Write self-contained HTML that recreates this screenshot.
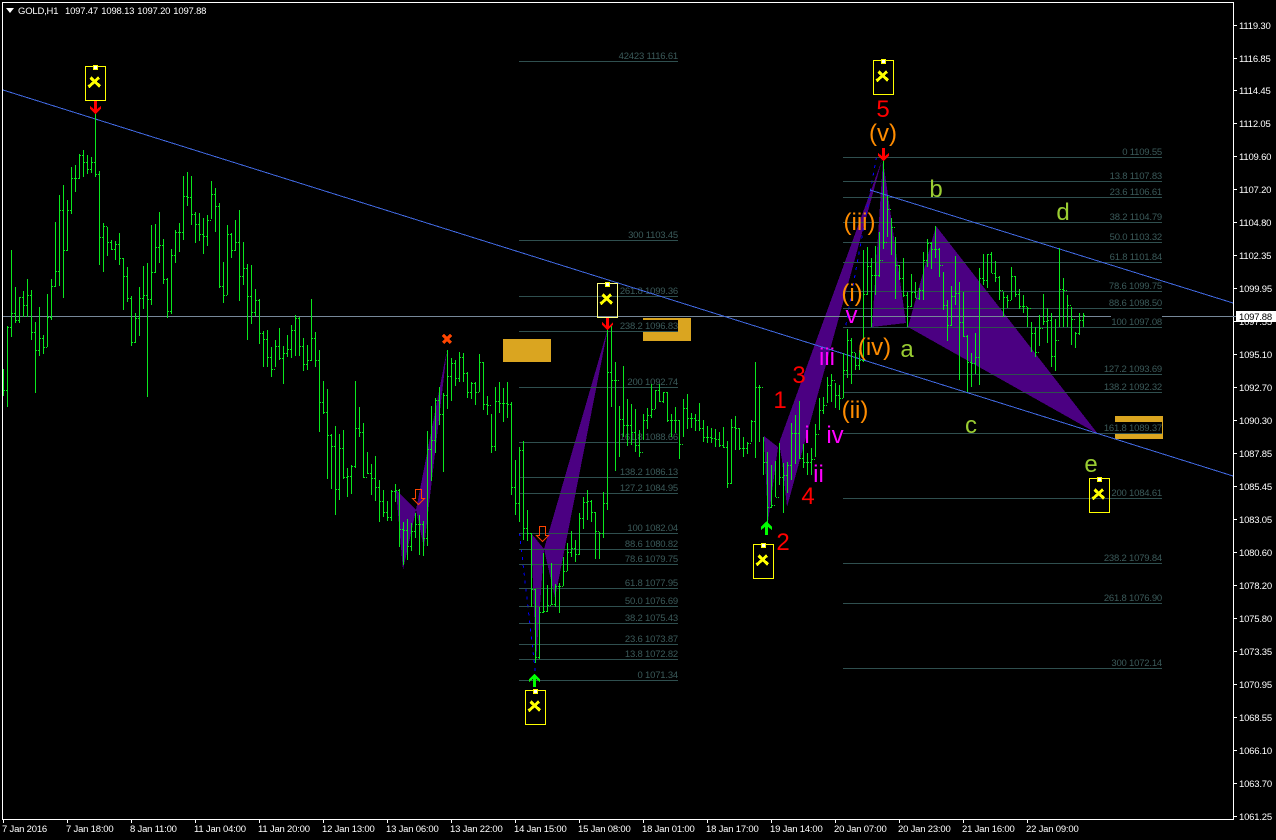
<!DOCTYPE html>
<html><head><meta charset="utf-8"><title>GOLD,H1</title>
<style>
html,body{margin:0;padding:0;background:#000;width:1276px;height:840px;overflow:hidden}
svg{display:block;position:absolute;left:0;top:0}
text{font-family:"Liberation Sans",sans-serif}
.ax text{font-size:9.5px;letter-spacing:-.2px;fill:#fff}
.fl text{font-size:9.5px;letter-spacing:-.2px;fill:#3b5a5a;text-anchor:end}
.w text{font-size:24px;text-anchor:middle}
</style></head><body>
<svg width="1276" height="840" viewBox="0 0 1276 840" xmlns="http://www.w3.org/2000/svg">
<rect width="1276" height="840" fill="#000"/>
<!-- harmonic patterns -->
<g fill="#4b0082" shape-rendering="crispEdges">
<polygon points="396,490 416,510 403,570"/>
<polygon points="416,510 447,350 424,548"/>
<polygon points="531,533 544,549 536,662"/>
<polygon points="544,549 608,328 555,598"/>
<polygon points="764,436 778,447 768,522"/>
<polygon points="779,443 882,160 787,507 782,460"/>
<polygon points="883,160 906,323 872,327"/>
<polygon points="908,327 936,226 1098,434"/>
</g>
<!-- zones -->
<g fill="#daa520">
<rect x="503" y="339" width="48" height="23"/>
<rect x="643" y="318" width="48" height="23"/>
<rect x="1115" y="416" width="48" height="23"/>
</g>
<!-- current price line -->
<path d="M3 316.5H1233" stroke="#778899" stroke-width="1" shape-rendering="crispEdges"/>
<!-- blue dotted -->
<g stroke="#0000ff" stroke-width="1" stroke-dasharray="3 5" fill="none" shape-rendering="crispEdges">
<path d="M519.5 533L535.5 673"/>
<path d="M876.5 157L845.5 327"/>
</g>
<!-- fib lines -->
<g fill="#2f4f4f" shape-rendering="crispEdges">
<rect x="519" y="61" width="159" height="1"/><rect x="519" y="240" width="159" height="1"/><rect x="519" y="296" width="159" height="1"/><rect x="519" y="331" width="159" height="1"/><rect x="519" y="387" width="159" height="1"/><rect x="519" y="442" width="159" height="1"/><rect x="519" y="477" width="159" height="1"/><rect x="519" y="493" width="159" height="1"/><rect x="519" y="533" width="159" height="1"/><rect x="519" y="549" width="159" height="1"/><rect x="519" y="564" width="159" height="1"/><rect x="519" y="588" width="159" height="1"/><rect x="519" y="606" width="159" height="1"/><rect x="519" y="623" width="159" height="1"/><rect x="519" y="644" width="159" height="1"/><rect x="519" y="659" width="159" height="1"/><rect x="519" y="680" width="159" height="1"/>
<rect x="843" y="157" width="319" height="1"/><rect x="843" y="181" width="319" height="1"/><rect x="843" y="197" width="319" height="1"/><rect x="843" y="222" width="319" height="1"/><rect x="843" y="242" width="319" height="1"/><rect x="843" y="262" width="319" height="1"/><rect x="843" y="291" width="319" height="1"/><rect x="843" y="308" width="319" height="1"/><rect x="843" y="327" width="319" height="1"/><rect x="843" y="374" width="319" height="1"/><rect x="843" y="392" width="319" height="1"/><rect x="843" y="433" width="319" height="1"/><rect x="843" y="498" width="319" height="1"/><rect x="843" y="563" width="319" height="1"/><rect x="843" y="603" width="319" height="1"/><rect x="843" y="668" width="319" height="1"/>
</g>
<!-- fib label backgrounds -->
<g fill="#000" shape-rendering="crispEdges">
<rect x="618" y="50" width="60" height="11"/><rect x="628" y="229" width="50" height="11"/><rect x="620" y="285" width="58" height="11"/><rect x="620" y="320" width="58" height="11"/><rect x="628" y="376" width="50" height="11"/><rect x="620" y="431" width="58" height="11"/><rect x="620" y="466" width="58" height="11"/><rect x="620" y="482" width="58" height="11"/><rect x="628" y="522" width="50" height="11"/><rect x="625" y="538" width="53" height="11"/><rect x="625" y="553" width="53" height="11"/><rect x="625" y="577" width="53" height="11"/><rect x="625" y="595" width="53" height="11"/><rect x="625" y="612" width="53" height="11"/><rect x="625" y="633" width="53" height="11"/><rect x="625" y="648" width="53" height="11"/><rect x="638" y="669" width="40" height="11"/>
<rect x="1122" y="146" width="40" height="11"/><rect x="1109" y="170" width="53" height="11"/><rect x="1109" y="186" width="53" height="11"/><rect x="1109" y="211" width="53" height="11"/><rect x="1109" y="231" width="53" height="11"/><rect x="1109" y="251" width="53" height="11"/><rect x="1109" y="280" width="53" height="11"/><rect x="1109" y="297" width="53" height="11"/><rect x="1111" y="316" width="51" height="11"/><rect x="1104" y="363" width="58" height="11"/><rect x="1104" y="381" width="58" height="11"/><rect x="1104" y="422" width="58" height="11"/><rect x="1111" y="487" width="51" height="11"/><rect x="1104" y="552" width="58" height="11"/><rect x="1104" y="592" width="58" height="11"/><rect x="1111" y="657" width="51" height="11"/>
</g>
<g class="fl">
<text x="678" y="59">42423 1116.61</text><text x="678" y="238">300 1103.45</text><text x="678" y="294">261.8 1099.36</text><text x="678" y="329">238.2 1096.83</text><text x="678" y="385">200 1092.74</text><text x="678" y="440">161.8 1088.66</text><text x="678" y="475">138.2 1086.13</text><text x="678" y="491">127.2 1084.95</text><text x="678" y="531">100 1082.04</text><text x="678" y="547">88.6 1080.82</text><text x="678" y="562">78.6 1079.75</text><text x="678" y="586">61.8 1077.95</text><text x="678" y="604">50.0 1076.69</text><text x="678" y="621">38.2 1075.43</text><text x="678" y="642">23.6 1073.87</text><text x="678" y="657">13.8 1072.82</text><text x="678" y="678">0 1071.34</text>
<text x="1162" y="155">0 1109.55</text><text x="1162" y="179">13.8 1107.83</text><text x="1162" y="195">23.6 1106.61</text><text x="1162" y="220">38.2 1104.79</text><text x="1162" y="240">50.0 1103.32</text><text x="1162" y="260">61.8 1101.84</text><text x="1162" y="289">78.6 1099.75</text><text x="1162" y="306">88.6 1098.50</text><text x="1162" y="325">100 1097.08</text><text x="1162" y="372">127.2 1093.69</text><text x="1162" y="390">138.2 1092.32</text><text x="1162" y="431">161.8 1089.37</text><text x="1162" y="496">200 1084.61</text><text x="1162" y="561">238.2 1079.84</text><text x="1162" y="601">261.8 1076.90</text><text x="1162" y="666">300 1072.14</text>
</g>
<!-- trend lines -->
<g stroke="#4169e1" stroke-width="1" fill="none" shape-rendering="crispEdges">
<path d="M3 90L1233 476"/>
<path d="M870 190L1233 303"/>
</g>
<!-- bars -->
<path transform="translate(.5 0)" shape-rendering="crispEdges" stroke="#0ae81e" stroke-width="1" fill="none" d="M3 369V396M7 326V407M11 250V337M15 287V323M19 297V323M23 291V317M27 279V317M31 290V340M35 322V393M39 307V356M43 335V354M47 294V347M51 279V320M55 222V287M59 195V286M63 185V298M67 200V251M71 167V214M75 165V192M79 154V179M83 150V177M87 155V174M91 157V173M95 109V177M99 171V265M103 223V272M107 227V256M111 240V250M115 241V260M119 233V265M123 258V310M127 267V302M131 296V346M135 313V343M139 287V336M143 266V309M147 263V397M151 225V305M155 224V273M159 212V263M163 239V284M167 278V318M171 249V314M175 230V263M179 223V252M183 176V240M187 172V206M191 176V225M195 212V243M199 213V241M203 218V254M207 215V246M211 181V219M215 188V232M219 203V288M223 262V303M227 225V295M231 233V258M235 220V251M239 210V301M243 242V285M247 264V340M251 265V324M255 289V316M259 299V344M263 331V367M267 330V367M271 347V377M275 340V367M279 328V360M283 346V384M287 335V357M291 325V358M295 315V356M299 317V356M303 338V371M307 345V370M311 299V361M315 332V367M319 350V432M323 381V414M327 389V479M331 434V489M335 426V515M339 434V500M343 430V479M347 468V497M351 465V494M355 381V468M359 407V437M363 423V478M367 452V474M371 464V495M375 456V501M379 480V522M383 490V517M387 501V521M391 490V521M395 484V502M399 489V547M403 522V565M407 519V560M411 523V551M415 513V538M419 515V555M423 521V556M427 431V546M431 406V481M435 398V453M439 387V425M443 393V472M447 350V409M451 358V401M455 360V386M459 352V382M463 353V382M467 372V398M471 382V399M475 382V405M479 354V392M483 362V410M487 396V415M491 414V453M495 387V451M499 382V413M503 388V422M507 382V418M511 402V495M515 460V515M519 447V522M523 441V540M527 510V541M531 533V607M535 589V663M539 607V659M543 553V613M547 585V612M551 563V605M555 584V607M559 583V613M563 557V586M567 543V571M571 531V557M575 540V562M579 513V555M583 497V529M587 490V520M591 500V522M595 512V559M599 532V559M603 492V538M607 325V510M611 325V407M615 362V471M619 406V457M623 366V437M627 399V446M631 404V445M635 409V452M639 430V457M643 414V440M647 408V429M651 384V418M655 390V409M659 384V402M663 392V403M667 392V422M671 414V437M675 407V433M679 420V459M683 399V437M687 394V429M691 413V428M695 414V431M699 403V431M703 420V442M707 426V443M711 428V443M715 429V447M719 432V447M723 427V448M727 441V488M731 419V484M735 416V450M739 428V450M743 437V457M747 442V454M751 420V442M755 362V458M759 385V442M763 437V475M767 452V523M771 465V508M775 461V497M779 443V485M783 463V513M787 462V493M791 423V480M795 415V464M799 401V459M803 444V468M807 453V475M811 448V475M815 424V457M819 398V430M823 397V414M827 377V403M831 374V402M835 383V408M839 385V410M843 353V398M847 329V378M851 338V384M855 353V370M859 350V370M863 250V362M867 247V295M871 258V327M875 246V295M879 232V277M883 156V249M887 196V237M891 218V255M895 237V299M899 265V280M903 258V297M907 292V327M911 274V307M915 282V298M919 288V300M923 252V300M927 239V267M931 242V269M935 226V258M939 248V277M943 272V310M947 300V341M951 286V326M955 256V305M959 282V380M963 292V337M967 335V392M971 353V387M975 333V374M979 268V385M983 254V285M987 254V288M991 252V273M995 261V282M999 276V300M1003 292V317M1007 295V308M1011 267V300M1015 276V297M1019 289V309M1023 295V313M1027 307V327M1031 322V352M1035 327V357M1039 315V346M1043 294V325M1047 308V343M1051 313V367M1055 319V371M1059 248V327M1063 278V327M1067 295V327M1071 307V345M1075 332V348M1079 313V335M1083 313V327"/>
<path transform="translate(0 .5)" shape-rendering="crispEdges" stroke="#0ae81e" stroke-width="1" fill="none" d="M4 390h1m1 0h1M8 327h1m1 0h1M12 313h1m1 0h1M16 320h1m1 0h1M20 297h1m1 0h1M24 305h1m1 0h1M28 295h1m1 0h1M32 332h1m1 0h1M36 350h1m1 0h1M40 338h1m1 0h1M44 347h1m1 0h1M48 317h1m1 0h1M52 286h1m1 0h1M56 271h1m1 0h1M60 210h1m1 0h1M64 250h1m1 0h1M68 210h1m1 0h1M72 178h1m1 0h1M76 178h1m1 0h1M80 155h1m1 0h1M84 162h1m1 0h1M88 169h1m1 0h1M92 162h1m1 0h1M96 174h1m1 0h1M100 237h1m1 0h1M104 226h1m1 0h1M108 242h1m1 0h1M112 249h1m1 0h1M116 244h1m1 0h1M120 258h1m1 0h1M124 276h1m1 0h1M128 298h1m1 0h1M132 342h1m1 0h1M136 318h1m1 0h1M140 298h1m1 0h1M144 295h1m1 0h1M148 299h1m1 0h1M152 272h1m1 0h1M156 247h1m1 0h1M160 245h1m1 0h1M164 279h1m1 0h1M168 311h1m1 0h1M172 255h1m1 0h1M176 232h1m1 0h1M180 232h1m1 0h1M184 196h1m1 0h1M188 197h1m1 0h1M192 214h1m1 0h1M196 224h1m1 0h1M200 234h1m1 0h1M204 236h1m1 0h1M208 220h1m1 0h1M212 194h1m1 0h1M216 206h1m1 0h1M220 286h1m1 0h1M224 295h1m1 0h1M228 234h1m1 0h1M232 250h1m1 0h1M236 242h1m1 0h1M240 276h1m1 0h1M244 268h1m1 0h1M248 296h1m1 0h1M252 312h1m1 0h1M256 300h1m1 0h1M260 333h1m1 0h1M264 339h1m1 0h1M268 357h1m1 0h1M272 369h1m1 0h1M276 346h1m1 0h1M280 358h1m1 0h1M284 353h1m1 0h1M288 349h1m1 0h1M292 330h1m1 0h1M296 318h1m1 0h1M300 346h1m1 0h1M304 364h1m1 0h1M308 360h1m1 0h1M312 338h1m1 0h1M316 360h1m1 0h1M320 402h1m1 0h1M324 412h1m1 0h1M328 435h1m1 0h1M332 446h1m1 0h1M336 489h1m1 0h1M340 448h1m1 0h1M344 477h1m1 0h1M348 476h1m1 0h1M352 466h1m1 0h1M356 428h1m1 0h1M360 432h1m1 0h1M364 477h1m1 0h1M368 473h1m1 0h1M372 478h1m1 0h1M376 487h1m1 0h1M380 501h1m1 0h1M384 512h1m1 0h1M388 517h1m1 0h1M392 491h1m1 0h1M396 490h1m1 0h1M400 529h1m1 0h1M404 530h1m1 0h1M408 546h1m1 0h1M412 531h1m1 0h1M416 524h1m1 0h1M420 524h1m1 0h1M424 538h1m1 0h1M428 449h1m1 0h1M432 440h1m1 0h1M436 400h1m1 0h1M440 414h1m1 0h1M444 395h1m1 0h1M448 376h1m1 0h1M452 363h1m1 0h1M456 378h1m1 0h1M460 357h1m1 0h1M464 373h1m1 0h1M468 392h1m1 0h1M472 383h1m1 0h1M476 392h1m1 0h1M480 362h1m1 0h1M484 404h1m1 0h1M488 405h1m1 0h1M492 446h1m1 0h1M496 401h1m1 0h1M500 403h1m1 0h1M504 403h1m1 0h1M508 404h1m1 0h1M512 487h1m1 0h1M516 503h1m1 0h1M520 450h1m1 0h1M524 528h1m1 0h1M528 533h1m1 0h1M532 589h1m1 0h1M536 657h1m1 0h1M540 612h1m1 0h1M544 611h1m1 0h1M548 605h1m1 0h1M552 604h1m1 0h1M556 586h1m1 0h1M560 586h1m1 0h1M564 571h1m1 0h1M568 552h1m1 0h1M572 548h1m1 0h1M576 554h1m1 0h1M580 518h1m1 0h1M584 502h1m1 0h1M588 501h1m1 0h1M592 512h1m1 0h1M596 531h1m1 0h1M600 533h1m1 0h1M604 503h1m1 0h1M608 372h1m1 0h1M612 380h1m1 0h1M616 380h1m1 0h1M620 419h1m1 0h1M624 425h1m1 0h1M628 425h1m1 0h1M632 432h1m1 0h1M636 445h1m1 0h1M640 452h1m1 0h1M644 420h1m1 0h1M648 415h1m1 0h1M652 409h1m1 0h1M656 390h1m1 0h1M660 401h1m1 0h1M664 392h1m1 0h1M668 420h1m1 0h1M672 420h1m1 0h1M676 420h1m1 0h1M680 444h1m1 0h1M684 408h1m1 0h1M688 418h1m1 0h1M692 418h1m1 0h1M696 420h1m1 0h1M700 428h1m1 0h1M704 437h1m1 0h1M708 437h1m1 0h1M712 438h1m1 0h1M716 439h1m1 0h1M720 445h1m1 0h1M724 447h1m1 0h1M728 483h1m1 0h1M732 427h1m1 0h1M736 428h1m1 0h1M740 448h1m1 0h1M744 448h1m1 0h1M748 443h1m1 0h1M752 421h1m1 0h1M756 387h1m1 0h1M760 387h1m1 0h1M764 462h1m1 0h1M768 507h1m1 0h1M772 505h1m1 0h1M776 497h1m1 0h1M780 477h1m1 0h1M784 475h1m1 0h1M788 465h1m1 0h1M792 433h1m1 0h1M796 433h1m1 0h1M800 458h1m1 0h1M804 462h1m1 0h1M808 462h1m1 0h1M812 459h1m1 0h1M816 434h1m1 0h1M820 410h1m1 0h1M824 405h1m1 0h1M828 385h1m1 0h1M832 380h1m1 0h1M836 395h1m1 0h1M840 398h1m1 0h1M844 370h1m1 0h1M848 340h1m1 0h1M852 352h1m1 0h1M856 365h1m1 0h1M860 360h1m1 0h1M864 294h1m1 0h1M868 266h1m1 0h1M872 275h1m1 0h1M876 275h1m1 0h1M880 260h1m1 0h1M884 242h1m1 0h1M888 209h1m1 0h1M892 227h1m1 0h1M896 265h1m1 0h1M900 278h1m1 0h1M904 295h1m1 0h1M908 306h1m1 0h1M912 292h1m1 0h1M916 298h1m1 0h1M920 290h1m1 0h1M924 260h1m1 0h1M928 243h1m1 0h1M932 249h1m1 0h1M936 249h1m1 0h1M940 265h1m1 0h1M944 305h1m1 0h1M948 325h1m1 0h1M952 296h1m1 0h1M956 293h1m1 0h1M960 322h1m1 0h1M964 336h1m1 0h1M968 362h1m1 0h1M972 363h1m1 0h1M976 357h1m1 0h1M980 278h1m1 0h1M984 280h1m1 0h1M988 254h1m1 0h1M992 273h1m1 0h1M996 277h1m1 0h1M1000 290h1m1 0h1M1004 297h1m1 0h1M1008 300h1m1 0h1M1012 276h1m1 0h1M1016 294h1m1 0h1M1020 306h1m1 0h1M1024 306h1m1 0h1M1028 308h1m1 0h1M1032 333h1m1 0h1M1036 352h1m1 0h1M1040 328h1m1 0h1M1044 321h1m1 0h1M1048 320h1m1 0h1M1052 356h1m1 0h1M1056 340h1m1 0h1M1060 289h1m1 0h1M1064 290h1m1 0h1M1068 305h1m1 0h1M1072 319h1m1 0h1M1076 333h1m1 0h1M1080 320h1m1 0h1M1084 315h1"/>
<!-- wave labels -->
<g class="w">
<g fill="#ff0000"><text x="883" y="117">5</text><text x="799" y="383">3</text><text x="780" y="408">1</text><text x="808" y="504">4</text><text x="783" y="550">2</text></g>
<g fill="#ff8c00"><text x="883" y="141">(v)</text><text x="859.5" y="230">(iii)</text><text x="852" y="301">(i)</text><text x="874.5" y="355">(iv)</text><text x="855" y="418">(ii)</text></g>
<g fill="#ff00ff" style="font-size:22px"><text x="851.5" y="323">v</text><text x="827" y="365">iii</text><text x="807" y="443">i</text><text x="835" y="443">iv</text><text x="818.5" y="482">ii</text></g>
<g fill="#9acd32"><text x="907" y="357">a</text><text x="936" y="197">b</text><text x="971" y="433">c</text><text x="1063" y="220">d</text><text x="1091" y="472">e</text></g>
</g>
<!-- arrows -->
<g fill="#ff0000" shape-rendering="crispEdges">
<polygon points="94,101 97,101 97,109 101,106 101,109 95.5,114 90,109 90,106 94,109"/>
<polygon points="606,317 609,317 609,326 613,322 613,325 607.5,330 602,325 602,322 606,326"/>
<polygon points="882,148 885,148 885,156 889,153 889,156 883.5,161 878,156 878,153 882,156"/>
</g>
<g fill="#00ff00" shape-rendering="crispEdges">
<polygon points="533,687 536,687 536,679 540,682 540,679 534.5,674 529,679 529,682 533,679"/>
<polygon points="765,535 768,535 768,527 772,530 772,527 766.5,521 761,527 761,530 765,527"/>
</g>
<g fill="none" stroke="#ff4500" stroke-width="1">
<polygon points="415.5,489.5 421.5,489.5 421.5,498.5 424.5,498.5 418.5,504.5 412.5,498.5 415.5,498.5"/>
<polygon points="539.5,526.5 545.5,526.5 545.5,535.5 548.5,535.5 542.5,541.5 536.5,535.5 539.5,535.5"/>
</g>
<path transform="translate(447 339)" d="M-4 -4L4 4M4 -4L-4 4" stroke="#ff4500" stroke-width="3" fill="none" shape-rendering="crispEdges"/>
<!-- yellow boxes -->
<g fill="none" stroke="#ffff00" stroke-width="1" shape-rendering="crispEdges">
<rect x="85.5" y="66.5" width="20" height="34"/>
<rect x="597.5" y="283.5" width="20" height="34" stroke="#ffff80"/>
<rect x="525.5" y="690.5" width="20" height="34"/>
<rect x="753.5" y="544.5" width="20" height="34"/>
<rect x="873.5" y="60.5" width="20" height="34"/>
<rect x="1089.5" y="478.5" width="20" height="34"/>
</g>
<g fill="#ffff00" shape-rendering="crispEdges">
<rect x="93" y="65" width="5" height="5"/><rect x="605" y="282" width="5" height="5"/><rect x="533" y="689" width="5" height="5"/><rect x="761" y="543" width="5" height="5"/><rect x="881" y="59" width="5" height="5"/><rect x="1097" y="477" width="5" height="5"/>
</g>
<g fill="#fff" shape-rendering="crispEdges">
<rect x="94" y="66" width="3" height="3"/><rect x="606" y="283" width="3" height="3"/><rect x="534" y="690" width="3" height="3"/><rect x="762" y="544" width="3" height="3"/><rect x="882" y="60" width="3" height="3"/><rect x="1098" y="478" width="3" height="3"/>
</g>
<g fill="none" stroke="#ffff00" stroke-width="3" shape-rendering="crispEdges">
<path transform="translate(94.5 82)" d="M-4 -4.5L5.5 4.5M4.5 -4.5L-6 5"/>
<path transform="translate(606.5 299)" d="M-4 -4.5L5.5 4.5M4.5 -4.5L-6 5"/>
<path transform="translate(534.5 706)" d="M-4 -4.5L5.5 4.5M4.5 -4.5L-6 5"/>
<path transform="translate(762.5 560)" d="M-4 -4.5L5.5 4.5M4.5 -4.5L-6 5"/>
<path transform="translate(882.5 76)" d="M-4 -4.5L5.5 4.5M4.5 -4.5L-6 5"/>
<path transform="translate(1098.5 494)" d="M-4 -4.5L5.5 4.5M4.5 -4.5L-6 5"/>
</g>
<!-- frame -->
<g fill="#fff" shape-rendering="crispEdges">
<rect x="2" y="2" width="1232" height="1"/><rect x="2" y="2" width="1" height="818"/><rect x="1233" y="2" width="1" height="818"/><rect x="2" y="819" width="1232" height="1"/>
</g>
<path d="M6 8h8l-4 5z" fill="#fff"/>
<!-- axis ticks -->
<path transform="translate(0 .5)" stroke="#fff" stroke-width="1" shape-rendering="crispEdges" d="M1234 25h3M1234 58h3M1234 90h3M1234 123h3M1234 156h3M1234 189h3M1234 222h3M1234 255h3M1234 288h3M1234 321h3M1234 354h3M1234 387h3M1234 420h3M1234 453h3M1234 486h3M1234 519h3M1234 552h3M1234 585h3M1234 618h3M1234 651h3M1234 684h3M1234 717h3M1234 750h3M1234 783h3M1234 816h3"/>
<path transform="translate(.5 0)" stroke="#fff" stroke-width="1" shape-rendering="crispEdges" d="M3 820v3M67 820v3M131 820v3M195 820v3M259 820v3M323 820v3M387 820v3M451 820v3M515 820v3M579 820v3M643 820v3M707 820v3M771 820v3M835 820v3M899 820v3M963 820v3M1027 820v3"/>
<g class="ax">
<text x="18" y="14">GOLD,H1</text><text x="65" y="14">1097.47</text><text x="101.3" y="14">1098.13</text><text x="137.3" y="14">1097.20</text><text x="173.3" y="14">1097.88</text>
<text x="1239" y="29">1119.30</text><text x="1239" y="62">1116.85</text><text x="1239" y="94">1114.45</text><text x="1239" y="127">1112.05</text><text x="1239" y="160">1109.60</text><text x="1239" y="193">1107.20</text><text x="1239" y="226">1104.80</text><text x="1239" y="259">1102.35</text><text x="1239" y="292">1099.95</text><text x="1239" y="325">1097.55</text><text x="1239" y="358">1095.10</text><text x="1239" y="391">1092.70</text><text x="1239" y="424">1090.30</text><text x="1239" y="457">1087.85</text><text x="1239" y="490">1085.45</text><text x="1239" y="523">1083.05</text><text x="1239" y="556">1080.60</text><text x="1239" y="589">1078.20</text><text x="1239" y="622">1075.80</text><text x="1239" y="655">1073.35</text><text x="1239" y="688">1070.95</text><text x="1239" y="721">1068.55</text><text x="1239" y="754">1066.10</text><text x="1239" y="787">1063.70</text><text x="1239" y="820">1061.25</text>
<text x="2" y="832">7 Jan 2016</text><text x="66" y="832">7 Jan 18:00</text><text x="130" y="832">8 Jan 11:00</text><text x="194" y="832">11 Jan 04:00</text><text x="258" y="832">11 Jan 20:00</text><text x="322" y="832">12 Jan 13:00</text><text x="386" y="832">13 Jan 06:00</text><text x="450" y="832">13 Jan 22:00</text><text x="514" y="832">14 Jan 15:00</text><text x="578" y="832">15 Jan 08:00</text><text x="642" y="832">18 Jan 01:00</text><text x="706" y="832">18 Jan 17:00</text><text x="770" y="832">19 Jan 14:00</text><text x="834" y="832">20 Jan 07:00</text><text x="898" y="832">20 Jan 23:00</text><text x="962" y="832">21 Jan 16:00</text><text x="1026" y="832">22 Jan 09:00</text>
</g>
<!-- current price -->
<rect x="1236" y="311" width="40" height="11" fill="#fff"/>
<path d="M1233 316.5h3" stroke="#778899" stroke-width="1" shape-rendering="crispEdges"/>
<text x="1239" y="320" style="font-size:9.5px;letter-spacing:-.2px" fill="#000">1097.88</text>
</svg>
</body></html>
